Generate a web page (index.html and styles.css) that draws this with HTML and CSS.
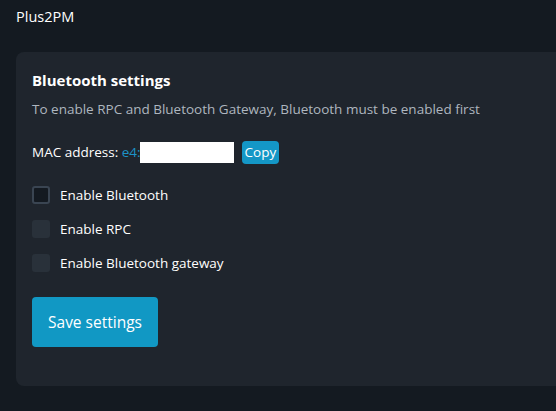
FILE: index.html
```html
<!DOCTYPE html>
<html>
<head>
<meta charset="utf-8">
<link rel="stylesheet" href="styles.css">
</head>
<body>
<header class="topbar">Plus2PM</header>
<main class="card">
  <h2 class="card-title">Bluetooth settings</h2>
  <p class="card-desc">To enable RPC and Bluetooth Gateway, Bluetooth must be enabled first</p>
  <div class="mac-row">
    <span class="mac-label">MAC address: <span class="mac-value">e4:</span></span>
    <span class="mac-mask"></span>
    <button class="btn-copy">Copy</button>
  </div>
  <label class="check-row"><span class="check focused"></span>Enable Bluetooth</label>
  <label class="check-row"><span class="check"></span>Enable RPC</label>
  <label class="check-row"><span class="check"></span>Enable Bluetooth gateway</label>
  <button class="btn-save">Save settings</button>
</main>
</body>
</html>
```
FILE: styles.css
```css
html, body {
  margin: 0;
  padding: 0;
  background: #141a21;
  color: #ffffff;
  font-family: "Open Sans", "Noto Sans", sans-serif;
  overflow: hidden;
}
body {
  width: 556px;
  height: 411px;
}
.topbar {
  padding: 7px 16px 0 16px;
  height: 52px;
  box-sizing: border-box;
  font-size: 14.5px;
}
.card {
  display: flex;
  flex-direction: column;
  align-items: flex-start;
  margin-left: 16px;
  width: 560px;
  height: 334px;
  box-sizing: border-box;
  background: #1f252d;
  border-radius: 8px;
  padding: 18px 16px 0 16px;
}
.card-title {
  margin: 0;
  font-size: 15px;
  font-weight: 700;
  line-height: 20px;
}
.card-desc {
  margin: 10px 0 0 0;
  font-size: 13.5px;
  line-height: 18px;
  color: #aeb6bf;
}
.mac-row {
  display: flex;
  align-items: center;
  margin-top: 22px;
  font-size: 13.5px;
  height: 24px;
}
.mac-value { color: #1d93c7; }
.mac-mask {
  display: inline-block;
  width: 94px;
  height: 21px;
  background: #ffffff;
  margin-left: -1px;
}
.btn-copy {
  margin-left: 8px;
  background: #1497c6;
  color: #ffffff;
  border: none;
  border-radius: 4px;
  font-family: inherit;
  font-size: 13.5px;
  padding: 0 3px;
  height: 23px;
  line-height: 23px;
}
.check-row {
  display: flex;
  align-items: center;
  font-size: 13.5px;
  height: 18px;
  margin-top: 16px;
}
.mac-row + .check-row { margin-top: 22px; }
.check {
  width: 18px;
  height: 18px;
  box-sizing: border-box;
  border-radius: 3px;
  background: #29313a;
  margin-right: 10px;
}
.check.focused {
  background: #141a21;
  border: 2px solid #3a4552;
}
.btn-save {
  margin-top: 25px;
  width: 126px;
  height: 50px;
  background: #1198c4;
  color: #ffffff;
  border: none;
  border-radius: 4px;
  font-family: inherit;
  font-size: 15.5px;
}
```
